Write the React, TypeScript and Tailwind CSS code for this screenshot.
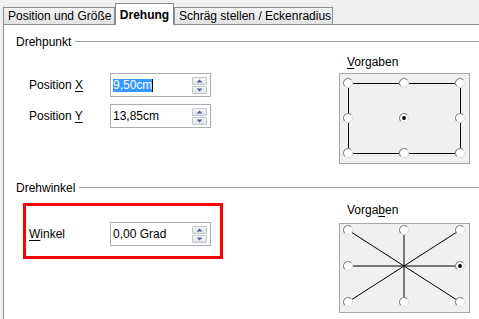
import React from "react";

const F = { fontFamily: '"Liberation Sans", Arial, sans-serif' };

function Spin() {
  return (
    <div className="flex flex-col w-[15px] h-[17px] gap-[1px]">
      {[0, 1].map((i) => (
        <div
          key={i}
          className="flex-1 border border-[#c2c6cc] rounded-[1px] bg-gradient-to-b from-[#f7f7f7] to-[#e2e4e8] flex items-center justify-center"
        >
          <svg width="7" height="4" viewBox="0 0 7 4">
            {i === 0 ? (
              <polygon points="0.5,3.5 3.5,0.5 6.5,3.5" fill="#4c6188" />
            ) : (
              <polygon points="0.5,0.5 3.5,3.5 6.5,0.5" fill="#4c6188" />
            )}
          </svg>
        </div>
      ))}
    </div>
  );
}

function Field({ children }: { children: React.ReactNode }) {
  return (
    <div className="w-[101px] h-[24px] border border-[#abadb3] bg-white flex items-center pl-[2px] pr-[3px]">
      <div className="flex-1 flex items-center">{children}</div>
      <Spin />
    </div>
  );
}

function Radio({ cx, cy, sel }: { cx: number; cy: number; sel?: boolean }) {
  const r = 4.5;
  const d = r * 0.7071;
  return (
    <g>
      <circle cx={cx} cy={cy} r={r} fill="#ffffff" stroke="#dcdcdc" strokeWidth="1" />
      <path
        d={`M ${cx - d} ${cy + d} A ${r} ${r} 0 0 1 ${cx + d} ${cy - d}`}
        fill="none"
        stroke="#8a8a8a"
        strokeWidth="1.2"
      />
      {sel && <circle cx={cx} cy={cy} r={1.9} fill="#000" />}
    </g>
  );
}

function Label({ pre, u, post }: { pre: string; u: string; post: string }) {
  return (
    <span>
      {pre}
      <span className="underline underline-offset-2">{u}</span>
      {post}
    </span>
  );
}

function Box1() {
  const xs = [8, 64, 120];
  const ys = [9, 44, 79];
  return (
    <div className="w-[131px] h-[91px] border border-[#a5a5a5] bg-[#f0f0f0]">
      <svg width="129" height="89" viewBox="0 0 129 89">
        <rect x="8.5" y="9.5" width="112" height="70" fill="none" stroke="#000" strokeWidth="1" />
        {ys.map((y) =>
          xs.map((x) => {
            if (y === 44 && x === 64) return <Radio key={`${x}-${y}`} cx={x} cy={y} sel />;
            return <Radio key={`${x}-${y}`} cx={x} cy={y} />;
          })
        )}
      </svg>
    </div>
  );
}

function Box2() {
  const xs = [8, 64, 120];
  const ys = [6, 42, 78];
  const cx = 64;
  const cy = 42;
  return (
    <div className="w-[131px] h-[90px] border border-[#a5a5a5] bg-[#f0f0f0]">
      <svg width="129" height="88" viewBox="0 0 129 88">
        {ys.map((y) =>
          xs.map((x) =>
            x === cx && y === cy ? null : (
              <line key={`l${x}-${y}`} x1={cx} y1={cy} x2={x} y2={y} stroke="#000" strokeWidth="1" />
            )
          )
        )}
        {ys.map((y) =>
          xs.map((x) =>
            x === cx && y === cy ? null : (
              <Radio key={`${x}-${y}`} cx={x} cy={y} sel={x === 120 && y === 42} />
            )
          )
        )}
      </svg>
    </div>
  );
}

export default function App() {
  return (
    <div
      className="w-[479px] h-[319px] bg-[#f0f0f0] flex flex-col overflow-hidden text-[12px] leading-[14px] text-black"
      style={F}
    >
      <div className="h-[24px] flex items-end pl-[3px] shrink-0">
        <div className="h-[17px] w-[112px] border border-b-0 border-[#898c95] bg-gradient-to-b from-[#f3f3f3] to-[#e3e3e3] flex items-center pl-[4px]">
          Position und Größe
        </div>
        <div className="h-[22px] w-[59px] border border-b-0 border-[#898c95] bg-white flex items-center justify-center font-bold relative z-10 -mb-px">
          Drehung
        </div>
        <div className="h-[17px] w-[159px] border border-b-0 border-[#898c95] bg-gradient-to-b from-[#f3f3f3] to-[#e3e3e3] flex items-center pl-[4px]">
          Schräg stellen / Eckenradius
        </div>
      </div>
      <div className="flex-1 bg-white border-t border-l border-[#898c95] ml-[3px] flex flex-col">
        <div className="mt-[10px] h-[14px] flex items-center pl-[12px]">
          <span>Drehpunkt</span>
          <div className="flex-1 h-px bg-[#a0a0a0] ml-[4px] -mt-px" />
        </div>
        <div className="mt-[6px] flex">
          <div className="w-[335px] pl-[25px] pt-[18px] flex flex-col gap-[7px]">
            <div className="flex items-center">
              <div className="w-[81px]">
                <Label pre="Position " u="X" post="" />
              </div>
              <Field>
                <span className="bg-[#3399ff] text-white leading-[13px]">9,50cm</span>
                <span className="w-px h-[13px] bg-black" />
              </Field>
            </div>
            <div className="flex items-center">
              <div className="w-[81px]">
                <Label pre="Position " u="Y" post="" />
              </div>
              <Field>
                <span>13,85cm</span>
              </Field>
            </div>
          </div>
          <div className="flex flex-col">
            <div className="h-[14px] pl-[8px]">
              <Label pre="" u="V" post="orgaben" />
            </div>
            <div className="mt-[4px]">
              <Box1 />
            </div>
          </div>
        </div>
        <div className="mt-[17px] h-[14px] flex items-center pl-[12px]">
          <span>Drehwinkel</span>
          <div className="flex-1 h-px bg-[#a0a0a0] ml-[4px] -mt-px" />
        </div>
        <div className="mt-[8px] flex">
          <div className="w-[335px] pl-[19px]">
            <div className="w-[200px] h-[56px] border-[3px] border-[#ff0000] pt-[16px] pl-[3px] flex items-start">
              <div className="flex items-center">
                <div className="w-[81px]">
                  <Label pre="" u="W" post="inkel" />
                </div>
                <Field>
                  <span>0,00 Grad</span>
                </Field>
              </div>
            </div>
          </div>
          <div className="flex flex-col">
            <div className="h-[14px] pl-[8px]">
              <Label pre="Vorga" u="b" post="en" />
            </div>
            <div className="mt-[6px]">
              <Box2 />
            </div>
          </div>
        </div>
      </div>
    </div>
  );
}
